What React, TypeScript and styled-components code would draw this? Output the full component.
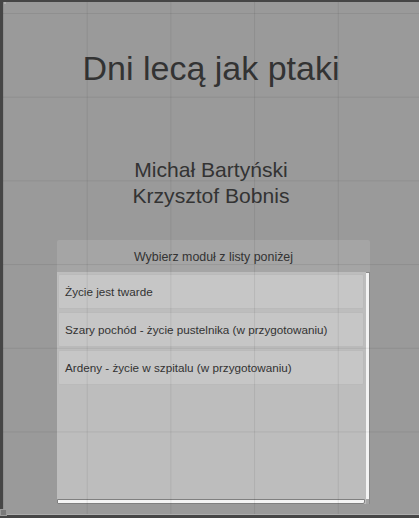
import React from "react";
import styled, { createGlobalStyle } from "styled-components";

const Global = createGlobalStyle`
  html, body { margin: 0; padding: 0; background: #3a3a3a; }
  body { font-family: "Liberation Sans", Arial, sans-serif; }
  * { box-sizing: border-box; }
`;

const Frame = styled.div`
  position: relative;
  width: 419px;
  height: 518px;
  display: flex;
  flex-direction: column;
  padding: 2px 0 3px 3px;
  background: #464646;
  border-top: 0;
`;

const Viewport = styled.div`
  position: relative;
  flex: 1;
  display: flex;
  flex-direction: column;
  align-items: center;
  background: #9a9a9a;
  border-bottom: 1px solid #adadad;
  color: #333333;
  overflow: hidden;
`;

const GridOverlay = styled.div`
  position: absolute;
  inset: 0;
  pointer-events: none;
  background-image:
    linear-gradient(to right, rgba(0, 0, 0, 0.075) 1px, transparent 1px),
    linear-gradient(to bottom, rgba(0, 0, 0, 0.075) 1px, transparent 1px);
  background-size: 83.7px 83.7px;
  background-position: 0 11px;
`;

const Title = styled.h1`
  margin: 49px 0 0 0;
  font-size: 34px;
  line-height: 34px;
  font-weight: 400;
  text-align: center;
`;

const Authors = styled.div`
  margin-top: 72px;
  font-size: 21.1px;
  line-height: 26px;
  text-align: center;
`;

const Panel = styled.div`
  align-self: flex-start;
  margin: 31px 0 0 54px;
  width: 313px;
  height: 264px;
  display: flex;
  flex-direction: column;
  border-radius: 2px 2px 0 0;
  background: rgba(255, 255, 255, 0.11);
`;

const PanelHeader = styled.div`
  height: 32px;
  display: flex;
  align-items: center;
  justify-content: center;
  font-size: 12.4px;
  padding-top: 1px;
`;

const ListArea = styled.div`
  flex: 1;
  display: grid;
  grid-template-columns: 1fr 4px;
  grid-template-rows: 1fr 5px;
  background: rgba(255, 255, 255, 0.27);
`;

const ItemList = styled.div`
  display: flex;
  flex-direction: column;
  gap: 3px;
  padding: 2px 2px 0 1px;
  min-width: 0;
`;

const Item = styled.div`
  height: 35px;
  display: flex;
  align-items: center;
  padding-left: 6px;
  font-size: 11.7px;
  white-space: nowrap;
  border: 1px solid rgba(0, 0, 0, 0.06);
  border-radius: 2px;
  background: rgba(255, 255, 255, 0.14);
`;

const VScroll = styled.div`
  background: #f3f3f3;
  border-right: 1px solid #8a8a8a;
  border-top: 1px solid #8a8a8a;
`;

const HScroll = styled.div`
  background: #f4f4f4;
  border: 1px solid #808080;
  border-radius: 0 0 2px 0;
  margin-right: 1px;
`;

const Corner = styled.div`
  background: #a4a4a4;
  border-right: 1px solid #8a8a8a;
`;

const CornerHandle = styled.div`
  position: absolute;
  left: 0;
  bottom: 2px;
  width: 7px;
  height: 7px;
  border: 1px solid #9a9a9a;
  background: #7a7a7a;
`;

const TopDot = styled.div`
  position: absolute;
  left: 4px;
  top: 2px;
  width: 2px;
  height: 2px;
  background: #b0b0b0;
`;

const items = [
  "Życie jest twarde",
  "Szary pochód - życie pustelnika (w przygotowaniu)",
  "Ardeny - życie w szpitalu (w przygotowaniu)",
];

export default function App() {
  return (
    <>
      <Global />
      <Frame>
        <Viewport>
          <Title>Dni lecą jak ptaki</Title>
          <Authors>
            Michał Bartyński
            <br />
            Krzysztof Bobnis
          </Authors>
          <Panel>
            <PanelHeader>Wybierz moduł z listy poniżej</PanelHeader>
            <ListArea>
              <ItemList>
                {items.map((t) => (
                  <Item key={t}>{t}</Item>
                ))}
              </ItemList>
              <VScroll />
              <HScroll />
              <Corner />
            </ListArea>
          </Panel>
          <GridOverlay />
        </Viewport>
        <TopDot />
        <CornerHandle />
      </Frame>
    </>
  );
}
